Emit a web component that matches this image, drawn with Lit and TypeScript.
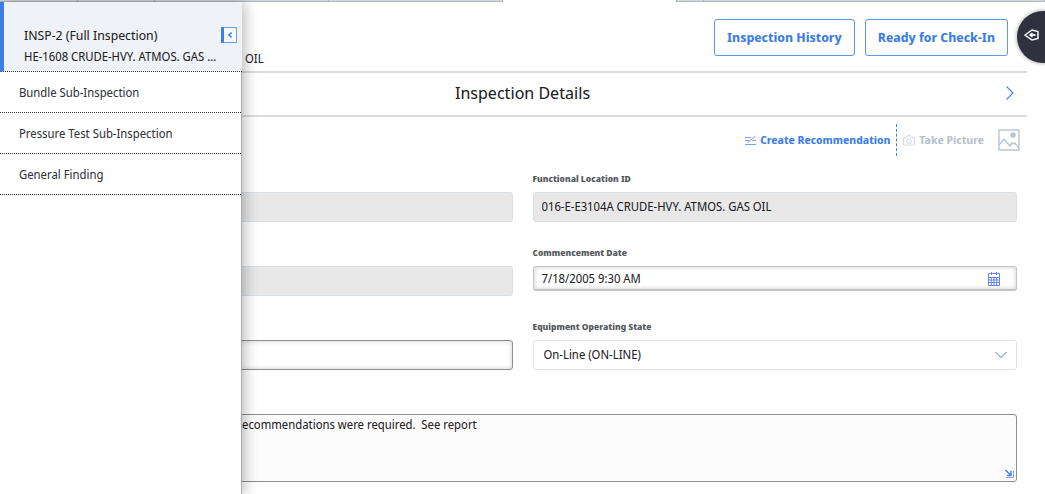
import { LitElement, html, css } from "lit";
import { customElement, property } from "lit/decorators.js";

const baseStyles = css`
  *,
  *::before,
  *::after {
    box-sizing: border-box;
  }
  button,
  input,
  select,
  textarea {
    font: inherit;
    color: inherit;
    margin: 0;
  }
  svg {
    display: block;
    fill: none;
  }
`;

@customElement("inspection-tree")
export class InspectionTree extends LitElement {
  @property({ attribute: false }) items: string[] = [];

  static styles = [
    baseStyles,
    css`
      :host {
        display: block;
        background: #fff;
        border-right: 1px solid #a3adb8;
        box-shadow: 2px 0 14px rgba(0, 0, 0, 0.3);
      }
      .current {
        display: flex;
        flex-direction: column;
        height: 70px;
        margin-right: -1px;
        padding: 23px 5px 0 20px;
        border-left: 4px solid #3b7ee6;
        border-bottom: 1px dotted #333;
        background: #eff2f6;
        line-height: 21px;
        white-space: nowrap;
      }
      .heading {
        display: flex;
        justify-content: space-between;
        font-size: 13px;
      }
      .collapse {
        display: grid;
        place-items: center;
        width: 16px;
        height: 16px;
        margin-top: 2px;
        padding: 0;
        border: 1px solid #6a9bf0;
        border-left: 3px solid #3b7ee6;
        background: #f5f8fd;
        cursor: pointer;
      }
      .items {
        margin: 0;
        padding: 0;
        list-style: none;
      }
      .item {
        display: flex;
        align-items: center;
        height: 41px;
        padding: 2px 19px 0;
        border-bottom: 1px dotted #333;
        color: #2f3338;
        text-decoration: none;
      }
    `,
  ];

  render() {
    return html`
      <div class="current">
        <div class="heading">
          <span>INSP-2 (Full Inspection)</span>
          <button class="collapse" aria-label="Collapse">
            <svg width="6" height="6" viewBox="0 0 6 6" stroke="#3b7ee6" stroke-width="1.4">
              <path d="M4.6 .6 1.8 3l2.8 2.4" />
            </svg>
          </button>
        </div>
        <span>HE-1608 CRUDE-HVY. ATMOS. GAS ...</span>
      </div>
      <nav>
        <ul class="items">
          ${this.items.map((item) => html`<li><a class="item" href="#">${item}</a></li>`)}
        </ul>
      </nav>
    `;
  }
}

@customElement("app-root")
export class AppRoot extends LitElement {
  static styles = [
    baseStyles,
    css`
      :host {
        display: block;
        position: relative;
        min-height: 100vh;
        overflow: hidden;
        background: #fff;
        color: #1d2023;
        font: 12px/20px "Noto Sans Display", "Noto Sans", sans-serif;
      }
      .tabs {
        display: grid;
        grid-template-columns: 78fr 77fr 174fr 174fr 174fr 27fr 341fr;
        height: 2px;
      }
      .tab {
        border-right: 1px solid #a9b0b6;
        border-bottom: 1px solid #b4babf;
        background: #d3dade;
      }
      .tab.active {
        border-bottom: 0;
        background: #fff;
      }
      .tree {
        position: absolute;
        top: 2px;
        bottom: 0;
        left: 0;
        width: 242px;
      }
      .page {
        padding: 0 18px 0 0;
      }
      .header {
        display: flex;
        justify-content: space-between;
        height: 71px;
        padding: 17px 19px 0 245px;
        border-bottom: 2px solid #dcdcdc;
      }
      .asset {
        align-self: flex-end;
        margin-bottom: 2px;
      }
      .actions {
        display: flex;
        gap: 10px;
      }
      .action {
        height: 37px;
        padding: 0 12px 2px;
        border: 1px solid #5b97ee;
        border-radius: 3px;
        background: #fff;
        color: #3b7ee6;
        font-size: 13px;
        font-weight: 700;
        cursor: pointer;
      }
      .section {
        display: grid;
        grid-template-columns: 1fr auto 1fr;
        align-items: center;
        height: 44px;
        padding: 0 12px 2px 30px;
        border-bottom: 2px solid #dcdcdc;
      }
      .title {
        grid-column: 2;
        margin: 0;
        font-size: 17px;
        font-weight: 400;
      }
      .icon-button {
        justify-self: end;
        padding: 0;
        border: 0;
        background: none;
        cursor: pointer;
      }
      .toolbar {
        display: flex;
        justify-content: flex-end;
        align-items: center;
        height: 50px;
        padding: 0 7px 4px 0;
      }
      .tool {
        display: flex;
        align-items: center;
        gap: 4px;
        height: 32px;
        padding: 0 6px;
        border: 0;
        background: none;
        color: #3b7ee6;
        font-size: 11px;
        font-weight: 700;
        cursor: pointer;
      }
      .tool.first {
        border-right: 1px dashed #3b7ee6;
      }
      .tool:disabled {
        padding-right: 14px;
        color: #b9c3ca;
        cursor: default;
      }
      .form {
        display: grid;
        grid-template-columns: 1fr 1fr;
        grid-auto-rows: 74px;
        column-gap: 20px;
        padding: 3px 10px 0 28px;
      }
      .field {
        display: flex;
        flex-direction: column;
      }
      .label {
        height: 22px;
        line-height: 18px;
        color: #55595d;
        font-size: 9px;
        font-weight: 800;
      }
      .input {
        width: 100%;
        height: 30px;
        padding: 0 8px 2px;
        border: 1px solid #8e8e8e;
        border-radius: 3px;
        background: #fff;
        box-shadow: inset 0 0 5px rgba(0, 0, 0, 0.2);
      }
      .input:read-only {
        border-color: #d8dfe5;
        background: #e8e8e8;
        box-shadow: none;
      }
      .date {
        display: flex;
        align-items: center;
        height: 25px;
        padding-right: 16px;
        border: 1px solid #c2c5c7;
        border-bottom-width: 2px;
        border-radius: 3px;
        box-shadow: inset 0 0 5px rgba(0, 0, 0, 0.2);
      }
      .date-input {
        flex: 1;
        min-width: 0;
        height: 22px;
        padding: 0 8px;
        border: 0;
        background: none;
      }
      .choice {
        display: grid;
        align-items: center;
      }
      .select {
        grid-area: 1 / 1;
        width: 100%;
        height: 30px;
        padding: 0 10px;
        border: 1px solid #dde4e9;
        border-radius: 3px;
        background: #fff;
        appearance: none;
      }
      .chevron {
        grid-area: 1 / 1;
        justify-self: end;
        margin-right: 10px;
        pointer-events: none;
      }
      .notes {
        display: grid;
        grid-column: 1 / -1;
        padding-top: 22px;
        height: 90px;
      }
      .textarea {
        grid-area: 1 / 1;
        width: 100%;
        height: 68px;
        padding: 0 8px 0 213px;
        border: 1px solid #8e8e8e;
        border-radius: 3px;
        background: #fcfcfc;
        resize: none;
      }
      .grip {
        grid-area: 1 / 1;
        place-self: end;
        margin: 0 3px 4px 0;
        pointer-events: none;
      }
      .drawer {
        position: absolute;
        top: 11px;
        right: -24px;
        display: flex;
        align-items: center;
        width: 52px;
        height: 52px;
        padding: 0 0 4px 7px;
        border: 0;
        border-radius: 50%;
        background: #2f313e;
        box-shadow: 0 0 4px rgba(0, 0, 0, 0.4);
        cursor: pointer;
      }
    `,
  ];

  render() {
    return html`
      <div class="tabs">
        <span class="tab"></span><span class="tab"></span><span class="tab"></span>
        <span class="tab"></span><span class="tab active"></span><span class="tab"></span>
        <span class="tab"></span>
      </div>

      <main class="page">
        <header class="header">
          <span class="asset">OIL</span>
          <div class="actions">
            <button class="action">Inspection History</button>
            <button class="action">Ready for Check-In</button>
          </div>
        </header>

        <div class="section">
          <h1 class="title">Inspection Details</h1>
          <button class="icon-button" aria-label="Next section">
            <svg width="10" height="16" viewBox="0 0 10 16" stroke="#4a86ea" stroke-width="1.2">
              <path d="M1.5 1.5 8 8l-6.500 6.500" />
            </svg>
          </button>
        </div>

        <div class="toolbar">
          <button class="tool first">
            <svg width="11" height="11" viewBox="0 0 11 11" stroke="#7f9ff0">
              <path d="M0 2.500h6M0 5.500h4M7 5.500h4M0 9.500h11" />
              <path d="M2.500 7.500 10.500 1" />
            </svg>
            Create Recommendation
          </button>
          <button class="tool" disabled>
            <svg width="12" height="11" viewBox="0 0 12 11" stroke="#d3dade">
              <path d="M.5 2.500h2.700l1-1.800h3.600l1 1.800h2.700v7.500H.5z" />
              <circle cx="6" cy="6" r="2.500" />
            </svg>
            Take Picture
          </button>
          <button class="icon-button" aria-label="Pictures">
            <svg width="22" height="22" viewBox="0 0 22 22" stroke="#b9c6cf" stroke-width="1.400">
              <path d="M1 1h20v20H1z" />
              <path d="m1 16 5-6 6 7 2-3 2 1 1-1 4 5" />
              <circle cx="15" cy="6" r="2.800" fill="#b9c6cf" stroke="none" />
            </svg>
          </button>
        </div>

        <form class="form">
          <div class="field">
            <span class="label"></span>
            <input class="input" aria-label="Asset ID" readonly />
          </div>
          <div class="field">
            <label class="label" for="location">Functional Location ID</label>
            <input
              class="input"
              id="location"
              readonly
              .value=${"016-E-E3104A CRUDE-HVY. ATMOS. GAS OIL"}
            />
          </div>
          <div class="field">
            <span class="label"></span>
            <input class="input" aria-label="Inspection Type" readonly />
          </div>
          <div class="field">
            <label class="label" for="start">Commencement Date</label>
            <div class="date">
              <input class="date-input" id="start" .value=${"7/18/2005 9:30 AM"} />
              <button class="icon-button" type="button" aria-label="Open calendar">
                <svg width="12" height="16" viewBox="0 -2 12 16" stroke="#6a86ea">
                  <path d="M.5 1.500h11v12H.5zM3.500 0v3M8.500 0v3" />
                  <path d="M.5 5.500h11M.5 8h11M.5 10.500h11M3.300 5.500v8M6 5.500v8M8.700 5.500v8" />
                </svg>
              </button>
            </div>
          </div>
          <div class="field">
            <span class="label"></span>
            <input class="input" aria-label="Completion Date" />
          </div>
          <div class="field">
            <label class="label" for="state">Equipment Operating State</label>
            <div class="choice">
              <select class="select" id="state">
                <option>On-Line (ON-LINE)</option>
              </select>
              <svg class="chevron" width="12" height="8" viewBox="0 0 12 8" stroke="#4a78e6">
                <path d="M.5 1 6 6.500 11.500 1" />
              </svg>
            </div>
          </div>
          <div class="notes">
            <textarea
              class="textarea"
              aria-label="Comments"
              .value=${"ecommendations were required.  See report"}
            ></textarea>
            <svg class="grip" width="9" height="9" viewBox="0 0 9 9" stroke="#3b7ee6">
              <path d="m.5 1 5 5M6 2v4.500H2" stroke-width="1.400" />
              <path d="M1 8.500h7.500V2" stroke="#8f9df2" />
            </svg>
          </div>
        </form>
      </main>

      <inspection-tree
        class="tree"
        .items=${["Bundle Sub-Inspection", "Pressure Test Sub-Inspection", "General Finding"]}
      ></inspection-tree>

      <button class="drawer" aria-label="Open side panel">
        <svg width="16" height="12" viewBox="0 0 16 12" stroke="#fff" stroke-width="1.500">
          <path d="M1 6 8 1l6 1.500v7L8 11z" />
          <path d="M6 6h5.500" stroke-width="1.800" />
          <path d="m8.500 4.200-2.500 1.800 2.500 1.800" />
        </svg>
      </button>
    `;
  }
}
